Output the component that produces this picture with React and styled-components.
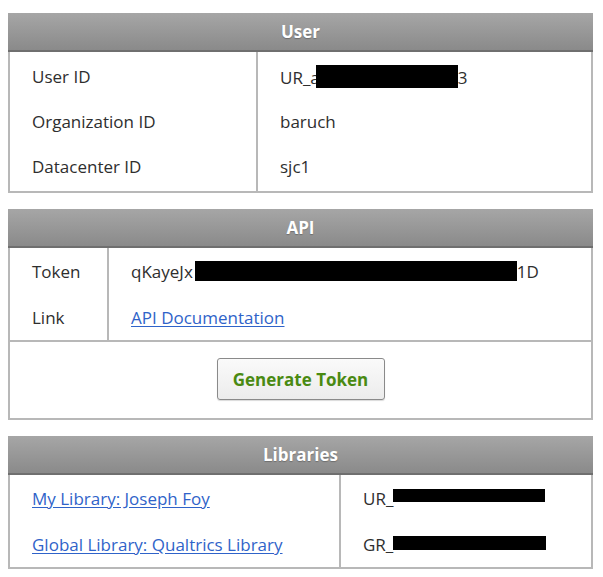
import React from 'react';
import styled, { createGlobalStyle } from 'styled-components';

const GlobalStyle = createGlobalStyle`
    body {
        margin:0;
        padding:13px 0 0 8px;
        background:#ffffff;
        font-family:"Open Sans", "Noto Sans", sans-serif;
        font-size:17px;
        color:#2e2e2e;
    }
`;

const Page = styled.div`
    width:585px;
    display:flex;
    flex-direction:column;
    gap:16px;
`;

const Panel = styled.section`
    border:2px solid #b8b8b8;
    border-top:none;
    background:#ffffff;
`;

const Header = styled.div`
    height:37px;
    display:flex;
    justify-content:center;
    align-items:center;
    background:linear-gradient(#a6a6a6, #8a8a8a);
    border-bottom:2px solid #6f6f6f;
    margin:0 -2px;
    color:#ffffff;
    font-weight:700;
    font-size:17px;
    text-shadow:0 1px 1px rgba(0, 0, 0, 0.25);
`;

const Body = styled.div`
    display:flex;
`;

const Column = styled.div`
    width:${p => p.width ? `${p.width}px` : 'auto'};
    flex:${p => p.width ? 'none' : '1'};
    padding:${p => p.pad || 0}px 0;
    border-right:${p => p.divider ? '2px solid #b8b8b8' : 'none'};
`;

const Cell = styled.div`
    height:${p => p.h}px;
    display:flex;
    align-items:center;
    padding-left:22px;
    white-space:nowrap;
`;

const Link = styled.a`
    color:#2f63c9;
    text-decoration:underline;
    text-underline-offset:2px;
    cursor:pointer;
`;

const Redact = styled.span`
    display:inline-block;
    width:${p => p.w}px;
    height:${p => p.h}px;
    margin-left:${p => p.shift || 0}px;
    background:#000000;
    vertical-align:${p => p.va}px;
`;

const Footer = styled.div`
    height:76px;
    border-top:2px solid #b8b8b8;
    display:flex;
    justify-content:center;
    align-items:center;
`;

const Button = styled.button`
    width:168px;
    height:42px;
    margin-top:-2px;
    border:1px solid #8a8a8a;
    border-radius:3px;
    background:linear-gradient(#fafafa, #ececec);
    box-shadow:0 1px 1px rgba(0, 0, 0, 0.15);
    color:#4a8a12;
    font-family:"Open Sans", "Noto Sans", sans-serif;
    font-size:17px;
    font-weight:700;
    cursor:pointer;
`;

const App = () => (
    <Page>
        <GlobalStyle />
        <Panel>
            <Header>User</Header>
            <Body>
                <Column width={246} pad={2} divider>
                    <Cell h={45}>User ID</Cell>
                    <Cell h={45}>Organization ID</Cell>
                    <Cell h={45}>Datacenter ID</Cell>
                </Column>
                <Column pad={2}>
                    <Cell h={45}>
                        <span>UR_a<Redact w={142} h={23} va={-4} shift={-4} />3</span>
                    </Cell>
                    <Cell h={45}>baruch</Cell>
                    <Cell h={45}>sjc1</Cell>
                </Column>
            </Body>
        </Panel>
        <Panel>
            <Header>API</Header>
            <Body>
                <Column width={97} divider>
                    <Cell h={46}>Token</Cell>
                    <Cell h={46}>Link</Cell>
                </Column>
                <Column>
                    <Cell h={46}>
                        <span>qKayeJx<Redact w={322} h={20} va={-3} shift={2} />1D</span>
                    </Cell>
                    <Cell h={46}><Link>API Documentation</Link></Cell>
                </Column>
            </Body>
            <Footer>
                <Button>Generate Token</Button>
            </Footer>
        </Panel>
        <Panel>
            <Header>Libraries</Header>
            <Body>
                <Column width={329} divider>
                    <Cell h={46}><Link>My Library: Joseph Foy</Link></Cell>
                    <Cell h={46}><Link>Global Library: Qualtrics Library</Link></Cell>
                </Column>
                <Column>
                    <Cell h={46}>
                        <span>UR_<Redact w={152} h={13} va={3} /></span>
                    </Cell>
                    <Cell h={46}>
                        <span>GR_<Redact w={153} h={14} va={1} /></span>
                    </Cell>
                </Column>
            </Body>
        </Panel>
    </Page>
);

export default App;
